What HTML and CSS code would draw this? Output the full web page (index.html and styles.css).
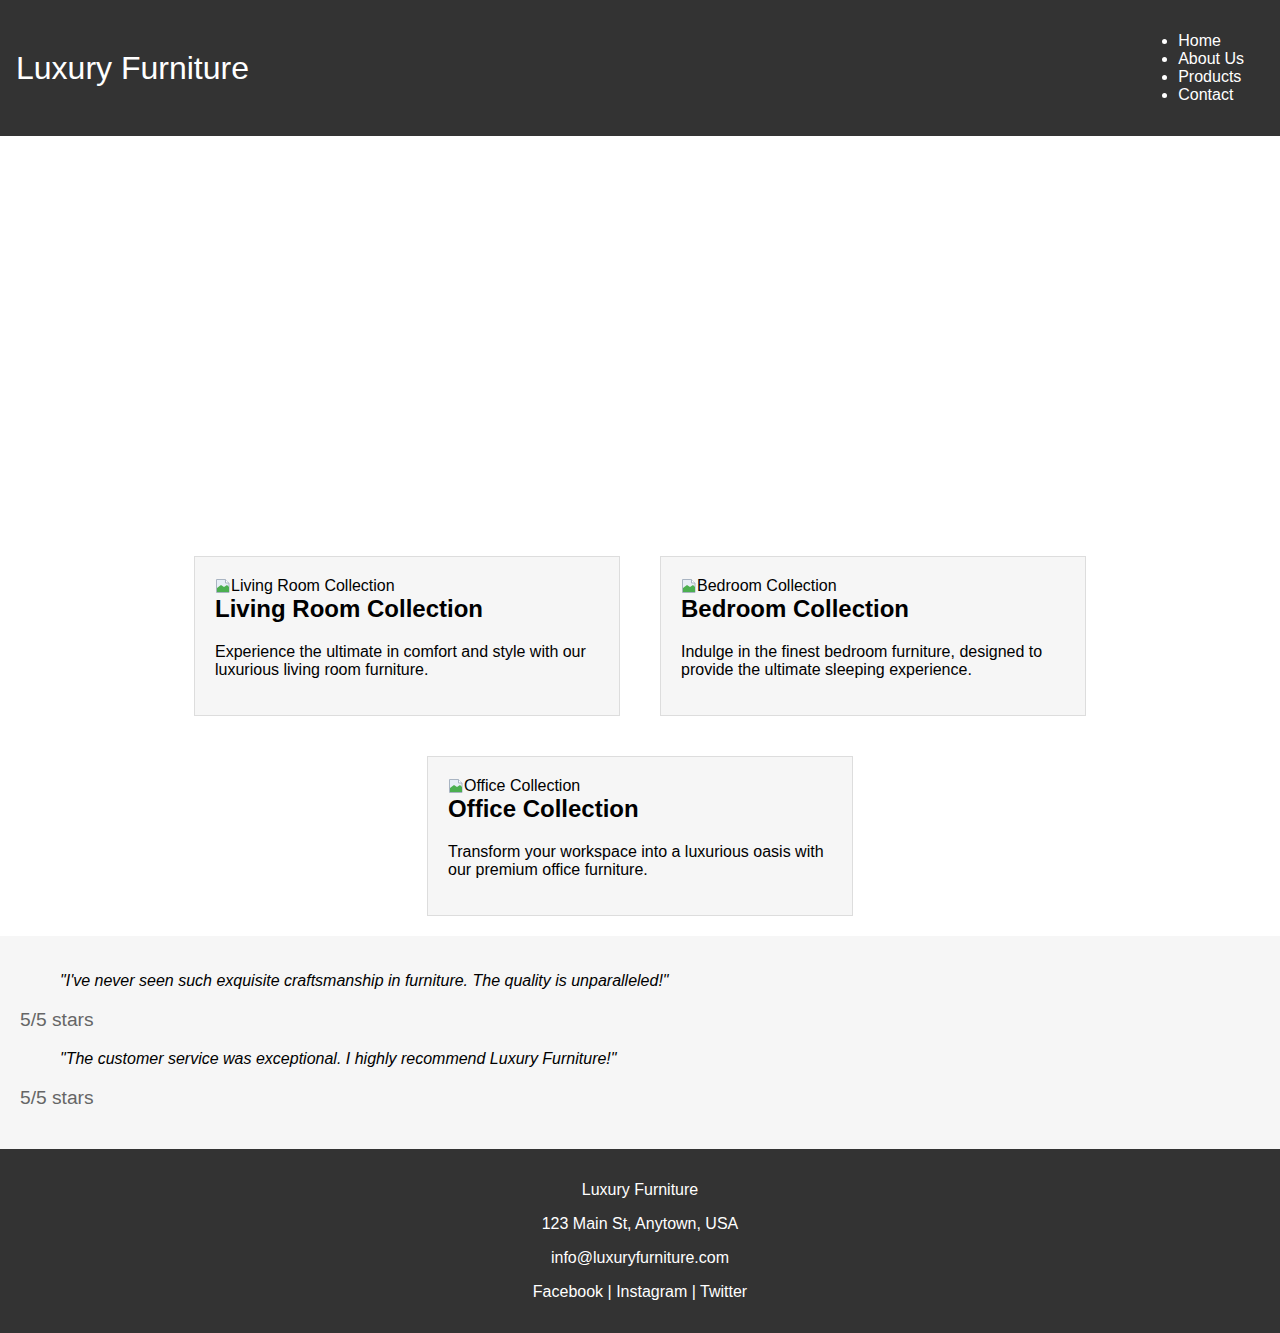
FILE: index.html
```html
<!DOCTYPE html>
<html lang="en">
<head>
<meta charset="utf-8">
<title>Luxury Furniture</title>
<link rel="stylesheet" href="styles.css">
</head>
<body>
<header class="site-header">
  <h1 class="logo">Luxury Furniture</h1>
  <nav>
    <ul class="nav-list">
      <li>Home</li>
      <li>About Us</li>
      <li>Products</li>
      <li>Contact</li>
    </ul>
  </nav>
</header>

<section class="hero"></section>

<section class="products">
  <div class="card">
    <div class="img-alt"><svg class="broken" width="16" height="16" viewBox="0 0 16 16"><path d="M1.5 1.5h9l3.5 3.5v9.5h-12.5z" fill="#e8eef6" stroke="#a9b4c2"/><path d="M2 10l4-3 3 2 3-2 2 2v5H2z" fill="#4caf50"/><path d="M10.5 1.5v3.5h3.5" fill="#fff" stroke="#a9b4c2"/></svg>Living Room Collection</div>
    <h2>Living Room Collection</h2>
    <p>Experience the ultimate in comfort and style with our luxurious living room furniture.</p>
  </div>
  <div class="card">
    <div class="img-alt"><svg class="broken" width="16" height="16" viewBox="0 0 16 16"><path d="M1.5 1.5h9l3.5 3.5v9.5h-12.5z" fill="#e8eef6" stroke="#a9b4c2"/><path d="M2 10l4-3 3 2 3-2 2 2v5H2z" fill="#4caf50"/><path d="M10.5 1.5v3.5h3.5" fill="#fff" stroke="#a9b4c2"/></svg>Bedroom Collection</div>
    <h2>Bedroom Collection</h2>
    <p>Indulge in the finest bedroom furniture, designed to provide the ultimate sleeping experience.</p>
  </div>
  <div class="card">
    <div class="img-alt"><svg class="broken" width="16" height="16" viewBox="0 0 16 16"><path d="M1.5 1.5h9l3.5 3.5v9.5h-12.5z" fill="#e8eef6" stroke="#a9b4c2"/><path d="M2 10l4-3 3 2 3-2 2 2v5H2z" fill="#4caf50"/><path d="M10.5 1.5v3.5h3.5" fill="#fff" stroke="#a9b4c2"/></svg>Office Collection</div>
    <h2>Office Collection</h2>
    <p>Transform your workspace into a luxurious oasis with our premium office furniture.</p>
  </div>
</section>

<section class="testimonials">
  <div class="testimonial">
    <blockquote>"I've never seen such exquisite craftsmanship in furniture. The quality is unparalleled!"</blockquote>
    <p class="rating">5/5 stars</p>
  </div>
  <div class="testimonial">
    <blockquote>"The customer service was exceptional. I highly recommend Luxury Furniture!"</blockquote>
    <p class="rating">5/5 stars</p>
  </div>
</section>

<footer class="site-footer">
  <p>Luxury Furniture</p>
  <p>123 Main St, Anytown, USA</p>
  <p>info@luxuryfurniture.com</p>
  <p>Facebook | Instagram | Twitter</p>
</footer>
</body>
</html>
```

FILE: styles.css
```css
html, body {
  margin: 0;
  padding: 0;
}

body {
  font-family: "Liberation Sans", Arial, sans-serif;
  font-size: 16px;
  color: #000;
  background: #fff;
}

.site-header {
  background: #333;
  color: #fff;
  padding: 16px;
  display: flex;
  justify-content: space-between;
  align-items: center;
}

.logo {
  margin: 0;
  font-size: 32px;
  font-weight: normal;
}

.nav-list {
  margin: 16px 0;
  padding-left: 40px;
}

.nav-list li {
  margin-right: 20px;
}

.hero {
  height: 400px;
}

.products {
  display: flex;
  flex-wrap: wrap;
  justify-content: center;
}

.card {
  box-sizing: content-box;
  width: 384px;
  padding: 20px;
  margin: 20px;
  border: 1px solid #ddd;
  background: #f6f6f6;
}

.img-alt {
  display: flex;
  align-items: center;
  height: 18px;
  line-height: 18px;
}

.broken {
  flex: none;
}

.card h2 {
  margin: 0 0 0.83em;
  font-size: 24px;
}

.card p {
  margin: 16px 0;
}

.testimonials {
  background: #f6f6f6;
  padding: 20px;
}

.testimonial blockquote {
  margin: 16px 40px;
  font-style: italic;
}

.rating {
  font-size: 1.2em;
  color: #666;
  margin: 1em 0;
}

.site-footer {
  background: #333;
  color: #fff;
  text-align: center;
  padding: 16px 20px 20px;
}

.site-footer p {
  margin: 16px 0;
}
```
